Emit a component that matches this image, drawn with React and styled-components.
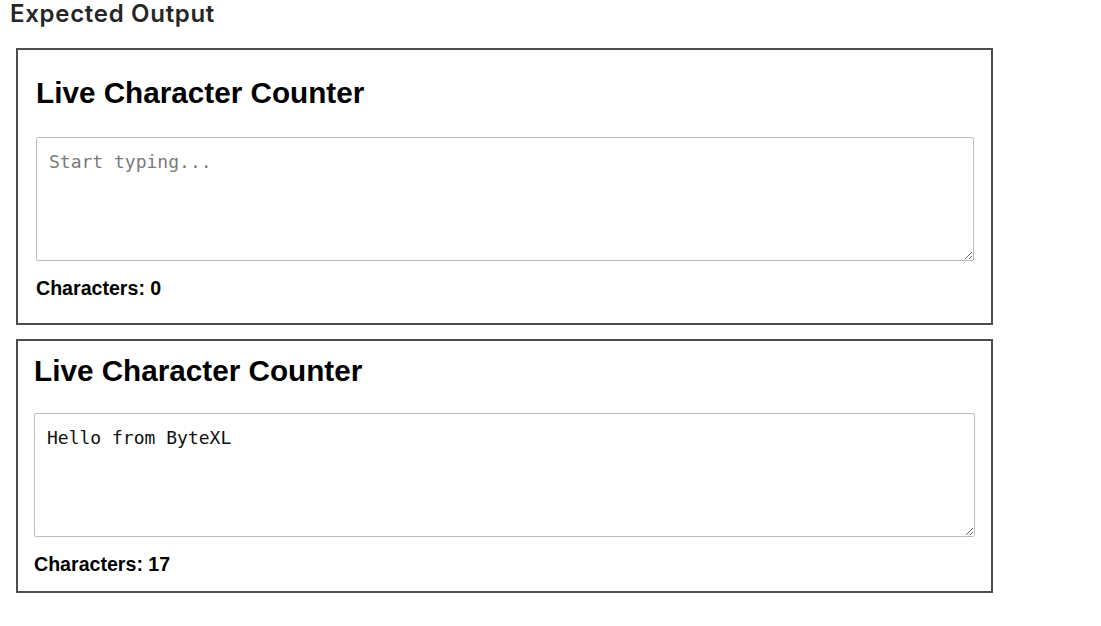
import { useState } from "react";
import styled, { createGlobalStyle } from "styled-components";

const GlobalStyle = createGlobalStyle`
  html, body {
    margin: 0;
    padding: 0;
    background: #ffffff;
  }
`;

const Page = styled.div`
  padding: 0 0 0 16px;
`;

const PageTitle = styled.div`
  margin: 0 0 20px -6px;
  font-family: Inter, "Noto Sans", sans-serif;
  font-weight: 600;
  font-size: 24px;
  line-height: 28px;
  letter-spacing: 0.7px;
  color: #262626;
`;

const Card = styled.div`
  box-sizing: border-box;
  width: 977px;
  border: 2px solid #4d4d4d;
  padding: ${({ $top }) => $top}px ${({ $right }) => $right}px
    ${({ $bottom }) => $bottom}px ${({ $left }) => $left}px;
  margin-top: ${({ $offset }) => $offset || 0}px;
  font-family: "Liberation Sans", Arial, sans-serif;
  color: #000;
`;

const Heading = styled.h2`
  margin: 0 0 ${({ $gap }) => $gap}px;
  font-size: 29.7px;
  line-height: 34px;
  font-weight: 700;
`;

const TextBox = styled.textarea`
  display: block;
  box-sizing: border-box;
  width: 100%;
  height: 124px;
  margin: 0;
  padding: 13px 12px;
  border: 1px solid #bdbdbd;
  border-radius: 2px;
  font-family: "DejaVu Sans Mono", "Liberation Mono", monospace;
  font-size: 18px;
  line-height: 21px;
  color: #111;
  outline: none;

  &::placeholder {
    color: #7a7a7a;
  }
`;

const Count = styled.div`
  margin-top: 16px;
  font-size: 19.6px;
  line-height: 22px;
  font-weight: 700;
`;

const CharacterCounter = ({ initial = "", layout }) => {
  const [text, setText] = useState(initial);

  return (
    <Card {...layout}>
      <Heading $gap={layout.$gap}>Live Character Counter</Heading>
      <TextBox
        value={text}
        placeholder="Start typing..."
        onChange={(e) => setText(e.target.value)}
      />
      <Count>Characters: {text.length}</Count>
    </Card>
  );
};

const App = () => (
  <>
    <GlobalStyle />
    <Page>
      <PageTitle>Expected Output</PageTitle>
      <CharacterCounter
        layout={{ $top: 26, $right: 17, $bottom: 24, $left: 18, $gap: 27 }}
      />
      <CharacterCounter
        initial="Hello from ByteXL"
        layout={{
          $top: 13,
          $right: 16,
          $bottom: 16,
          $left: 16,
          $gap: 25,
          $offset: 14,
        }}
      />
    </Page>
  </>
);

export default App;
